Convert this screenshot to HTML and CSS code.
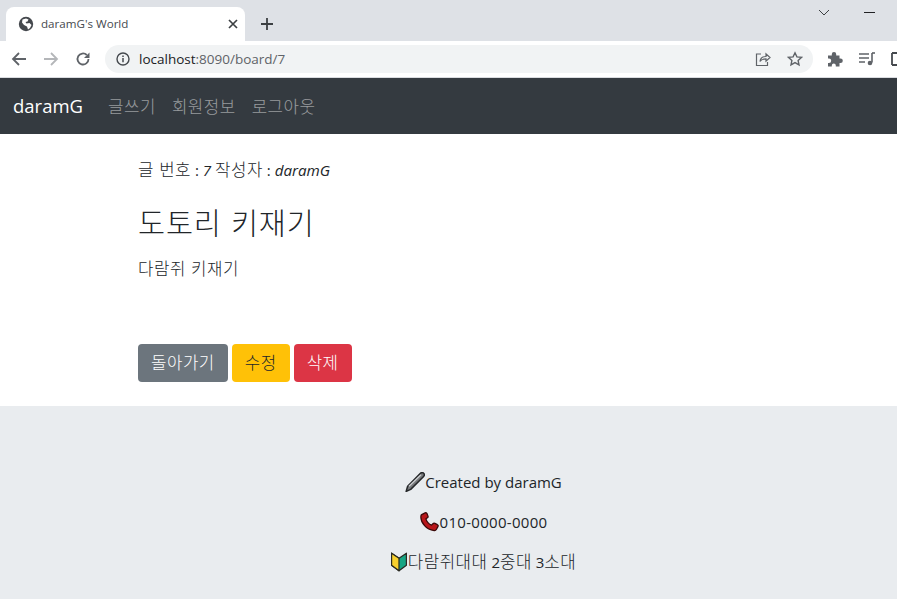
FILE: index.html
```html
<!DOCTYPE html>
<html lang="ko">
<head>
<meta charset="utf-8">
<title>daramG's World</title>
<link rel="stylesheet" href="styles.css">
</head>
<body>
<div class="tabstrip">
  <div class="tab">
    <svg class="favicon" width="16" height="16" viewBox="0 0 16 16"><circle cx="8" cy="8" r="7.2" fill="#45494e"/><path d="M4.500 3.500L8 2.500l2.500 1-1 2-2 .5 1 1.500 3-.5 2 2-1.500 3-2 1.500-1-3-3-1.500-2-2.500z" fill="#fff"/></svg>
    <span class="tab-title">daramG's World</span>
    <svg class="tab-close" width="10" height="10" viewBox="0 0 10 10"><path d="M1 1l8 8M9 1l-8 8" stroke="#3c4043" stroke-width="1.700" fill="none"/></svg>
  </div>
  <svg class="newtab" width="14" height="14" viewBox="0 0 14 14"><path d="M7 1v12M1 7h12" stroke="#3c4043" stroke-width="1.800" fill="none"/></svg>
  <div class="win-controls">
    <svg width="12" height="7" viewBox="0 0 12 7"><path d="M1 1l5 5 5-5" stroke="#3c4043" fill="none"/></svg>
    <svg class="win-min" width="11" height="1" viewBox="0 0 11 1"><path d="M0 .5h11" stroke="#202124"/></svg>
  </div>
</div>
<div class="toolbar">
  <svg class="tool-back" width="16" height="16" viewBox="0 0 16 16"><path d="M15 8H2M8 2L2 8l6 6" stroke="#5f6368" stroke-width="1.800" fill="none"/></svg>
  <svg class="tool-fwd" width="16" height="16" viewBox="0 0 16 16"><path d="M1 8h13M8 2l6 6-6 6" stroke="#b4b6b9" stroke-width="1.800" fill="none"/></svg>
  <svg class="tool-reload" width="16" height="16" viewBox="0 0 16 16"><path d="M13.500 8A5.500 5.500 0 1 1 11.800 4" stroke="#5f6368" stroke-width="1.800" fill="none"/><path d="M14.500 1.500v5.500H9z" fill="#5f6368"/></svg>
  <div class="omnibox">
    <svg width="14" height="14" viewBox="0 0 14 14"><circle cx="7" cy="7" r="6" stroke="#45494e" stroke-width="1.400" fill="none"/><path d="M7 6v4.200M7 3.500v1.500" stroke="#45494e" stroke-width="1.500"/></svg>
    <span class="url"><span class="host">localhost</span>:8090/board/7</span>
    <svg class="omni-share" width="16" height="16" viewBox="0 0 16 16"><path d="M6 3H1.500v11.500h11V11M5 10.500c.5-3.500 3-5 6-5V2.800l4 3.700-4 3.700V7.800c-2.500 0-4.500.6-6 2.700z" stroke="#5f6368" stroke-width="1.200" fill="none"/></svg>
    <svg class="omni-star" width="16" height="16" viewBox="0 0 16 16"><path d="M8 1.800l1.900 4.100 4.500.5-3.300 3 .9 4.500L8 11.600l-4 2.300.9-4.500-3.300-3 4.500-.5z" stroke="#5f6368" stroke-width="1.400" fill="none"/></svg>
  </div>
  <svg class="ext-puzzle" width="16" height="16" viewBox="0 0 16 16"><path d="M1 4.500h3.800V3.200a2.200 2.200 0 1 1 4.400 0v1.300H12.500v3h1a2.300 2.300 0 1 1 0 4.600h-1v3.400H8.800v-1a2 2 0 1 0-4 0v1H1v-3.600h1a2.200 2.200 0 1 0 0-4.400H1z" fill="#5f6368"/></svg>
  <svg class="ext-media" width="16" height="14" viewBox="0 0 16 14"><path d="M0 2h10M0 6h10M0 10h6" stroke="#5f6368" stroke-width="1.400"/><path d="M13 1v9.500" stroke="#5f6368" stroke-width="1.600"/><path d="M13 1h3" stroke="#5f6368" stroke-width="1.600"/><circle cx="11" cy="11" r="2.300" fill="#5f6368"/></svg>
  <svg class="ext-side" width="8" height="14" viewBox="0 0 8 14"><path d="M1 1h7M1 13h7M1 1v12" stroke="#45494e" stroke-width="1.800" fill="none"/></svg>
</div>
<nav class="navbar">
  <a class="brand">daramG</a>
  <a class="nav-link ko">글쓰기</a>
  <a class="nav-link ko">회원정보</a>
  <a class="nav-link ko">로그아웃</a>
</nav>
<main class="content">
  <p class="meta"><span class="ko">글 번호</span> : <em>7</em> <span class="ko">작성자</span> : <em>daramG</em></p>
  <h3 class="title ko">도토리 키재기</h3>
  <p class="body-text ko">다람쥐 키재기</p>
  <div class="actions">
    <button class="btn btn-gray"><span class="ko">돌아가기</span></button>
    <button class="btn btn-yellow"><span class="ko">수정</span></button>
    <button class="btn btn-red"><span class="ko">삭제</span></button>
  </div>
</main>
<footer class="footer">
  <p class="foot-line"><svg class="emoji" width="20" height="20" viewBox="1.500 1 17.500 17.500"><path d="M15 2.200c1-1 2-.9 2.800-.1.800.8.900 1.900 0 2.800L6.500 16.200 2.500 18 3.800 13.500z" fill="#77797c" stroke="#26282a" stroke-width="1.300" stroke-linejoin="round"/><path d="M5 13.500L15.500 3.500" stroke="#c9cbcd" stroke-width="1.200"/></svg><span>Created by daramG</span></p>
  <p class="foot-line"><svg class="emoji" width="20" height="20" viewBox="1.500 1 17.500 17.500"><path d="M3 3.300L6 1.800c.8-.4 1.300 0 1.600.6l.9 2.200c.2.700 0 1.200-.5 1.500l-1.300.9c.7 2.600 2.400 4.500 4.900 5.500l1.200-1.200c.5-.5 1.100-.6 1.700-.3l2.200 1.100c.7.400.9 1 .5 1.700l-1.400 2.500c-.4.700-1 1-1.900.9-3.300-.3-6.400-1.800-8.400-4.200C3.400 10.500 2 7.500 2.300 4.700c0-.6.200-1.100.7-1.400z" fill="#b8161a" stroke="#3a0808" stroke-width="1.100" stroke-linejoin="round"/></svg><span class="phone">010-0000-0000</span></p>
  <p class="foot-line"><svg class="emoji emoji-leaf" width="16" height="20" viewBox="1 1.500 14 17.500"><path d="M1.500 2.500L8 7l6.500-4.500v10.500L8 18l-6.500-5z" fill="#18a583" stroke="#2a2a22" stroke-width="1.100" stroke-linejoin="round"/><path d="M1.500 2.500L8 7v11l-6.500-5z" fill="#f7d02e" stroke="#2a2a22" stroke-width="1.100" stroke-linejoin="round"/></svg><span class="unit"><span class="ko">다람쥐대대</span> 2<span class="ko">중대</span> 3<span class="ko">소대</span></span></p>
</footer>
</body>
</html>
```
FILE: styles.css
```css
* { box-sizing: border-box; }
html, body { margin: 0; padding: 0; overflow: hidden; }
body {
  width: 897px;
  height: 599px;
  font-family: "Open Sans", "Noto Sans CJK KR", sans-serif;
  font-size: 15px;
  line-height: 24px;
  color: #212529;
  background: #fff;
  display: flex;
  flex-direction: column;
}
svg { display: block; flex: none; }

.ko {
  font-family: "Noto Sans CJK KR", sans-serif;
  font-size: 16.8px;
  letter-spacing: .03em;
  font-weight: 300;
}

.tabstrip {
  height: 41px;
  background: #dee1e6;
  display: flex;
  align-items: flex-end;
  padding-left: 6px;
  flex: none;
}
.tab {
  width: 239px;
  height: 34px;
  background: #fff;
  border-radius: 8px 8px 0 0;
  display: flex;
  align-items: center;
  padding: 0 7px 0 12px;
}
.favicon { margin-right: 7px; }
.tab-title {
  font-size: 11.6px;
  color: #45494e;
  flex: 1;
}
.newtab { margin: 0 0 10px 15px; }
.win-controls {
  margin-left: auto;
  align-self: flex-start;
  display: flex;
  align-items: center;
  padding: 9px 22px 0 0;
}
.win-min { margin-left: 34px; }

.toolbar {
  height: 37px;
  background: #fff;
  border-bottom: 1px solid #dadce0;
  display: flex;
  align-items: center;
  flex: none;
  padding-left: 11px;
  overflow: hidden;
}
.tool-fwd { margin-left: 16px; }
.tool-reload { margin-left: 16px; }
.omnibox {
  flex: none;
  width: 708px;
  height: 28px;
  margin-left: 14px;
  background: #f1f3f4;
  border-radius: 14px;
  display: flex;
  align-items: center;
  padding-left: 11px;
}
.url {
  margin-left: 9px;
  font-size: 13.5px;
  color: #5f6368;
  flex: 1;
}
.host { color: #202124; }
.omni-share { margin-right: 16px; }
.omni-star { margin-right: 10px; }
.ext-puzzle { margin-left: 14px; }
.ext-media { margin-left: 16px; }
.ext-side { margin-left: 16px; }

.navbar {
  height: 56px;
  background: #343a40;
  display: flex;
  align-items: center;
  padding-left: 13px;
  flex: none;
}
.brand {
  color: #fff;
  font-size: 18.5px;
  margin-right: 17px;
}
.nav-link {
  color: rgba(255, 255, 255, .5);
  margin: 0 8px;
}

.content {
  height: 272px;
  flex: none;
  padding: 23px 0 0 138px;
}
.meta { margin: 0 0 24px; height: 24px; }
.meta em { font-size: 15.2px; }
.title {
  margin: 0 0 18px;
  font-size: 29.4px;
  line-height: 33px;
  font-weight: 300;
}
.body-text { margin: 0 0 64px; }
.actions { display: flex; gap: 4px; }
.btn {
  font: inherit;
  height: 38px;
  padding: 0 12px 1px;
  border: 1px solid transparent;
  border-radius: 4px;
  color: #fff;
}
.btn-gray { background: #6c757d; }
.btn-yellow { background: #ffc107; color: #212529; }
.btn-red { background: #dc3545; }

.footer {
  flex: 1;
  background: #e9ecef;
  padding: 64px 0 0 70px;
  display: flex;
  flex-direction: column;
  align-items: center;
}
.foot-line {
  margin: 0 0 16px;
  display: flex;
  align-items: center;
}
.unit { height: 24px; margin-top: -1px; }
.phone { letter-spacing: .3px; }
.emoji-leaf { margin-right: 1px; }
```
